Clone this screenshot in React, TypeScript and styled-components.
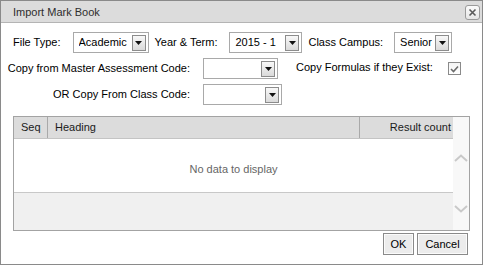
import React from "react";
import styled, { createGlobalStyle } from "styled-components";

const Global = createGlobalStyle`
  html, body { margin: 0; padding: 0; background: #fff; }
  body {
    font-family: "Liberation Sans", Arial, sans-serif;
    font-size: 11px;
    color: #000;
  }
  * { box-sizing: border-box; }
`;

const Dialog = styled.div`
  width: 483px;
  height: 265px;
  border: 1px solid #8a8a8a;
  background: #fff;
  display: flex;
  flex-direction: column;
`;

const TitleBar = styled.div`
  height: 22px;
  flex: none;
  background: #dcdcdc;
  border-bottom: 1px solid #b4b4b4;
  display: flex;
  align-items: center;
  justify-content: space-between;
  padding: 0 2px 0 12px;
`;

const Title = styled.span`
  color: #2e2e2e;
  font-size: 11px;
`;

const CloseButton = styled.button`
  width: 15px;
  height: 15px;
  margin-top: 1px;
  padding: 0;
  border: 1px solid #9a9a9a;
  border-radius: 3px;
  background: linear-gradient(#fafafa, #e6e6e6);
  display: flex;
  align-items: center;
  justify-content: center;
`;

const Body = styled.div`
  flex: 1;
  display: flex;
  flex-direction: column;
  padding: 9px 12px 0 6px;
`;

const Row = styled.div<{ $top?: number; $indent?: number }>`
  display: flex;
  align-items: center;
  height: 21px;
  margin-top: ${(p) => p.$top ?? 0}px;
  padding-left: ${(p) => p.$indent ?? 0}px;
`;

const Label = styled.span<{ $before?: number; $after?: number; $lift?: number }>`
  white-space: nowrap;
  margin-left: ${(p) => p.$before ?? 0}px;
  margin-right: ${(p) => p.$after ?? 0}px;
  padding-bottom: ${(p) => p.$lift ?? 2}px;
`;

const FieldLabel = styled.span`
  width: 183px;
  flex: none;
  text-align: right;
  white-space: nowrap;
  margin-right: 13px;
  padding-bottom: 1px;
`;

const ComboBox = styled.div<{ $w: number }>`
  width: ${(p) => p.$w}px;
  height: 21px;
  flex: none;
  border: 1px solid #a9a9a9;
  background: #fff;
  display: flex;
  align-items: center;
  padding: 0 2px 0 5px;
`;

const ComboText = styled.span`
  flex: 1;
  white-space: nowrap;
  overflow: hidden;
  padding-bottom: 1px;
`;

const Trigger = styled.span`
  width: 14px;
  height: 16px;
  flex: none;
  border: 1px solid #8c8c8c;
  background: linear-gradient(#f8f8f8, #dadada);
  display: flex;
  align-items: center;
  justify-content: center;
`;

const CheckBox = styled.span`
  width: 13px;
  height: 13px;
  flex: none;
  margin-left: 15px;
  border: 1px solid #8a8a8a;
  background: linear-gradient(#f4f4f4, #ffffff);
  display: flex;
  align-items: center;
  justify-content: center;
`;

const GridBox = styled.div`
  margin: 11px 0 0 6px;
  height: 115px;
  border: 1px solid #a3a3a3;
  display: flex;
`;

const GridMain = styled.div`
  flex: 1;
  display: flex;
  flex-direction: column;
`;

const HeaderRow = styled.div`
  height: 22px;
  flex: none;
  display: flex;
  background: #dcdcdc;
  border-bottom: 1px solid #c4c4c4;
`;

const HeaderCell = styled.div<{ $w?: number; $right?: boolean; $last?: boolean }>`
  ${(p) => (p.$w ? `width: ${p.$w}px; flex: none;` : "flex: 1;")}
  display: flex;
  align-items: center;
  justify-content: ${(p) => (p.$right ? "flex-end" : "flex-start")};
  padding: 0 ${(p) => (p.$right ? 2 : 0)}px 1px ${(p) => (p.$right ? 0 : 7)}px;
  border-right: ${(p) => (p.$last ? "none" : "1px solid #a9a9a9")};
  color: #1a1a1a;
`;

const EmptyArea = styled.div`
  height: 54px;
  flex: none;
  display: flex;
  align-items: center;
  justify-content: center;
  color: #666;
  border-bottom: 1px solid #c8c8c8;
  padding-top: 6px;
`;

const FillArea = styled.div`
  flex: 1;
  background: #f0f0f0;
`;

const ScrollColumn = styled.div`
  width: 16px;
  flex: none;
  background: #f8f8f8;
  display: flex;
  flex-direction: column;
  align-items: center;
  padding: 37px 0 17px;
`;

const ScrollSpacer = styled.div`
  flex: 1;
`;

const Footer = styled.div`
  display: flex;
  justify-content: flex-end;
  gap: 3px;
  margin-top: 2px;
  padding-right: 2px;
`;

const Button = styled.button<{ $w: number }>`
  width: ${(p) => p.$w}px;
  height: 22px;
  padding: 0 0 1px;
  border: 1px solid #8a8a8a;
  box-shadow: inset 0 0 0 1px #fbfbfb;
  background: #ececec;
  font-family: "Liberation Sans", Arial, sans-serif;
  font-size: 11px;
  color: #000;
`;

const Arrow = () => (
  <svg width="7" height="4" viewBox="0 0 7 4">
    <polygon points="0,0 7,0 3.5,4" fill="#111" />
  </svg>
);

const Combo = ({ w, value }: { w: number; value?: string }) => (
  <ComboBox $w={w}>
    <ComboText>{value ?? ""}</ComboText>
    <Trigger>
      <Arrow />
    </Trigger>
  </ComboBox>
);

const Chevron = ({ up }: { up?: boolean }) => (
  <svg width="14" height="8" viewBox="0 0 14 8">
    <polyline
      points={up ? "1,7 7,1.5 13,7" : "1,1 7,6.5 13,1"}
      fill="none"
      stroke="#c9c9c9"
      strokeWidth="2"
    />
  </svg>
);

export default function App() {
  return (
    <>
      <Global />
      <Dialog>
        <TitleBar>
          <Title>Import Mark Book</Title>
          <CloseButton aria-label="Close">
            <svg width="9" height="9" viewBox="0 0 9 9">
              <path d="M1.5 1.5 L7.5 7.5 M7.5 1.5 L1.5 7.5" stroke="#5a5a5a" strokeWidth="1.6" />
            </svg>
          </CloseButton>
        </TitleBar>
        <Body>
          <Row $indent={6}>
            <Label $after={12}>File Type:</Label>
            <Combo w={76} value="Academic" />
            <Label $before={6} $after={12}>Year &amp; Term:</Label>
            <Combo w={73} value="2015 - 1" />
            <Label $before={6} $after={11}>Class Campus:</Label>
            <Combo w={58} value="Senior" />
          </Row>
          <Row $top={5}>
            <FieldLabel>Copy from Master Assessment Code:</FieldLabel>
            <Combo w={75} />
            <Label $before={18} $lift={4}>Copy Formulas if they Exist:</Label>
            <CheckBox>
              <svg width="9" height="8" viewBox="0 0 9 8">
                <polyline points="1,4 3.5,6.5 8,1.5" fill="none" stroke="#6b6b6b" strokeWidth="1.6" />
              </svg>
            </CheckBox>
          </Row>
          <Row $top={5}>
            <FieldLabel>OR Copy From Class Code:</FieldLabel>
            <Combo w={79} />
          </Row>
          <GridBox>
            <GridMain>
              <HeaderRow>
                <HeaderCell $w={34}>Seq</HeaderCell>
                <HeaderCell $w={312}>Heading</HeaderCell>
                <HeaderCell $right $last>Result count</HeaderCell>
              </HeaderRow>
              <EmptyArea>No data to display</EmptyArea>
              <FillArea />
            </GridMain>
            <ScrollColumn>
              <Chevron up />
              <ScrollSpacer />
              <Chevron />
            </ScrollColumn>
          </GridBox>
          <Footer>
            <Button $w={31}>OK</Button>
            <Button $w={51}>Cancel</Button>
          </Footer>
        </Body>
      </Dialog>
    </>
  );
}
